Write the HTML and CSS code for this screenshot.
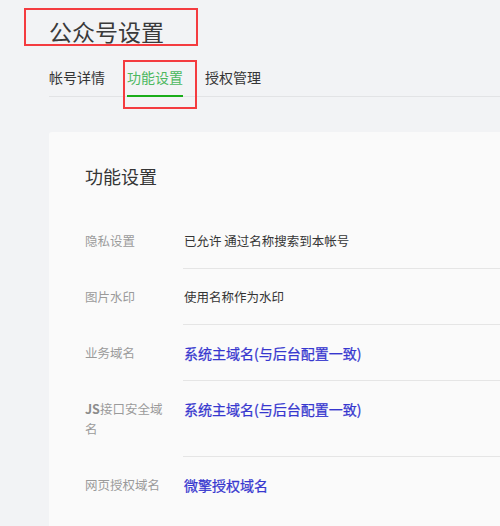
FILE: index.html
```html
<!DOCTYPE html>
<html lang="zh-CN">
<head>
<meta charset="utf-8">
<title>公众号设置</title>
<link rel="stylesheet" href="styles.css">
</head>
<body>
<div class="page">
  <h1 class="title">公众号设置</h1>
  <div class="mark mark-title"></div>
  <nav class="tabs">
    <span class="tab">帐号详情</span>
    <span class="tab active">功能设置</span>
    <span class="tab">授权管理</span>
  </nav>
  <div class="mark mark-tab"></div>
  <section class="card">
    <h2 class="card-title">功能设置</h2>
    <div class="row">
      <div class="label">隐私设置</div>
      <div class="value">已允许 通过名称搜索到本帐号</div>
    </div>
    <div class="row">
      <div class="label">图片水印</div>
      <div class="value">使用名称作为水印</div>
    </div>
    <div class="row">
      <div class="label">业务域名</div>
      <div class="value link">系统主域名(与后台配置一致)</div>
    </div>
    <div class="row">
      <div class="label"><b>JS</b>接口安全域名</div>
      <div class="value link">系统主域名(与后台配置一致)</div>
    </div>
    <div class="row last">
      <div class="label">网页授权域名</div>
      <div class="value link">微擎授权域名</div>
    </div>
  </section>
</div>
</body>
</html>
```

FILE: styles.css
```css
html, body {
  margin: 0;
  padding: 0;
  background: #f2f3f5;
  font-family: "Noto Sans CJK SC", "Noto Sans", sans-serif;
  color: #353535;
  overflow: hidden;
}

.page {
  position: relative;
  padding: 15px 0 0 49px;
}

.title {
  margin: 0;
  font-size: 23px;
  line-height: 32px;
  font-weight: normal;
  color: #3a3a3a;
}

.mark {
  position: absolute;
  border: 2px solid #f43b3f;
  box-sizing: border-box;
}

.mark-title {
  left: 24px;
  top: 8px;
  width: 174px;
  height: 38px;
}

.mark-tab {
  left: 123px;
  top: 60px;
  width: 74px;
  height: 49px;
}

.tabs {
  display: flex;
  gap: 22px;
  margin-top: 20px;
  border-bottom: 1px solid #e2e3e5;
}

.tab {
  font-size: 14px;
  line-height: 20px;
  padding-bottom: 8px;
  margin-bottom: -1px;
  color: #353535;
  border-bottom: 2px solid transparent;
}

.tab.active {
  color: #4cb85f;
  border-bottom-color: #1aad19;
}

.card {
  margin-top: 35px;
  background: #fafafa;
  border-radius: 3px 0 0 0;
  padding: 31px 0 0 36px;
  height: 420px;
}

.card-title {
  margin: 0 0 24px;
  font-size: 18px;
  line-height: 26px;
  font-weight: normal;
  color: #353535;
}

.row {
  display: flex;
}

.label {
  width: 84px;
  margin-right: 14px;
  padding: 17.5px 0;
  font-size: 12.5px;
  line-height: 20px;
  color: #9a9a9a;
}

.label b {
  font-weight: bold;
  color: #8c8c8c;
}

.value {
  flex: 1;
  padding: 17.5px 0 17.5px 1px;
  font-size: 12.5px;
  line-height: 20px;
  height: 20px;
  color: #353535;
  border-bottom: 1px solid #e5e5e5;
}

.row:nth-child(5) .value {
  height: 40px;
}

.value.link {
  font-size: 14px;
  color: #3737cf;
  font-weight: normal;
  -webkit-text-stroke: 0.25px #3737cf;
}

.row.last .value {
  border-bottom: none;
}
```
